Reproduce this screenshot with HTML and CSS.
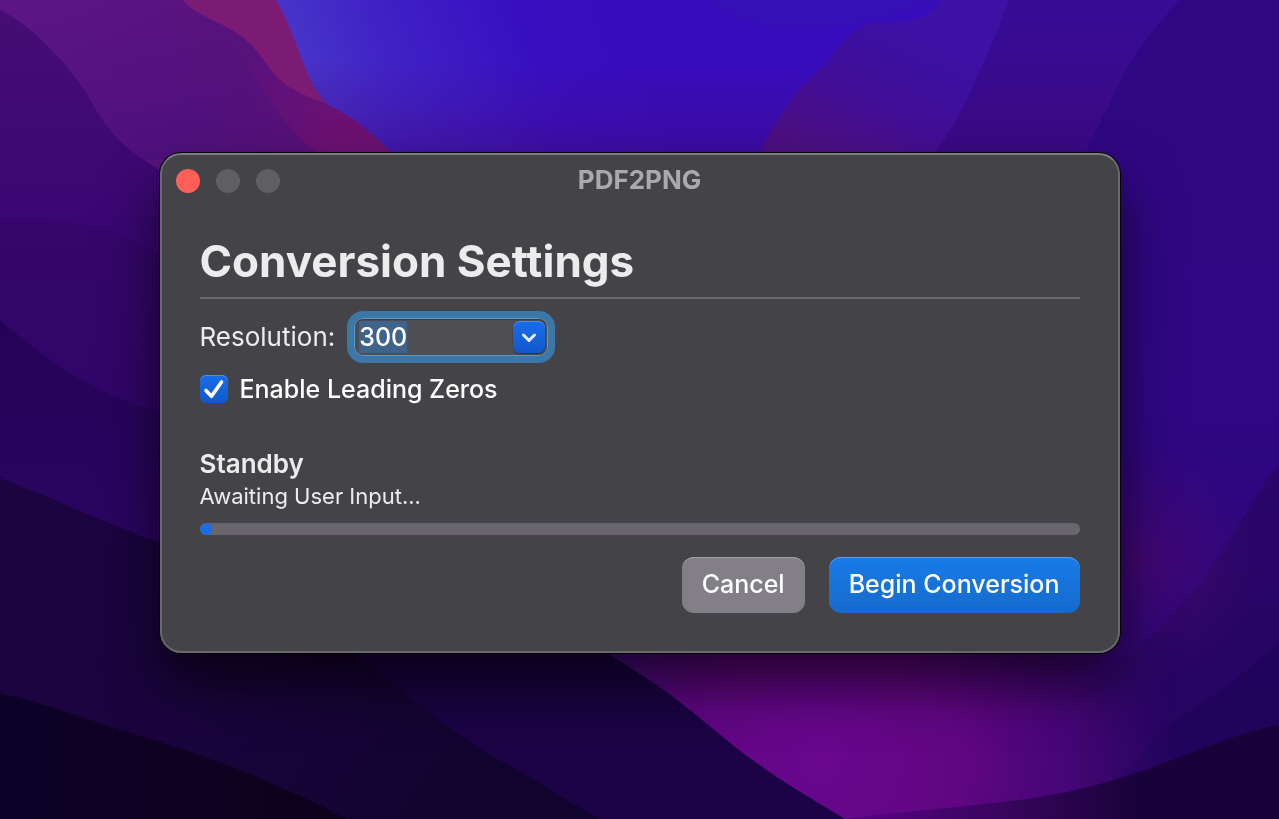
FILE: index.html
```
<!DOCTYPE html>
<html lang="en">
<head>
<meta charset="utf-8">
<title>PDF2PNG</title>
<link rel="stylesheet" href="styles.css">
</head>
<body>
<svg class="wallpaper" viewBox="0 0 1279 819" preserveAspectRatio="none" aria-hidden="true">
  <defs>
    <linearGradient id="sky" x1="300" y1="120" x2="620" y2="0" gradientUnits="userSpaceOnUse">
      <stop offset="0" stop-color="#4a38c8"/><stop offset=".3" stop-color="#4023c6"/><stop offset=".7" stop-color="#380fc0"/><stop offset="1" stop-color="#370cbc"/>
    </linearGradient>
    <linearGradient id="skyFade" x1="0" y1="60" x2="0" y2="170" gradientUnits="userSpaceOnUse">
      <stop offset="0" stop-color="#400c90" stop-opacity="0"/><stop offset="1" stop-color="#400c90" stop-opacity=".7"/>
    </linearGradient>
    <linearGradient id="plum" x1="60" y1="0" x2="330" y2="150" gradientUnits="userSpaceOnUse">
      <stop offset="0" stop-color="#5c1585"/><stop offset=".6" stop-color="#58127c"/><stop offset="1" stop-color="#6c1172"/>
    </linearGradient>
    <linearGradient id="plumFade" x1="0" y1="0" x2="0" y2="180" gradientUnits="userSpaceOnUse">
      <stop offset="0" stop-color="#48107c" stop-opacity="0"/><stop offset="1" stop-color="#48107c" stop-opacity=".7"/>
    </linearGradient>
    <linearGradient id="left1" x1="0" y1="10" x2="0" y2="260" gradientUnits="userSpaceOnUse">
      <stop offset="0" stop-color="#460d74"/><stop offset="1" stop-color="#380672"/>
    </linearGradient>
    <linearGradient id="left2" x1="0" y1="218" x2="0" y2="410" gradientUnits="userSpaceOnUse">
      <stop offset="0" stop-color="#35066b"/><stop offset="1" stop-color="#300568"/>
    </linearGradient>
    <linearGradient id="left3" x1="0" y1="330" x2="0" y2="520" gradientUnits="userSpaceOnUse">
      <stop offset="0" stop-color="#250458"/><stop offset="1" stop-color="#29055f"/>
    </linearGradient>
    <linearGradient id="left4" x1="0" y1="500" x2="480" y2="819" gradientUnits="userSpaceOnUse">
      <stop offset="0" stop-color="#1b0440"/><stop offset=".45" stop-color="#1b043e"/><stop offset="1" stop-color="#10042e"/>
    </linearGradient>
    <linearGradient id="left5" x1="0" y1="0" x2="340" y2="0" gradientUnits="userSpaceOnUse">
      <stop offset="0" stop-color="#0c0228"/><stop offset=".6" stop-color="#0f0222"/><stop offset="1" stop-color="#0b011a"/>
    </linearGradient>
    <linearGradient id="right1" x1="900" y1="20" x2="840" y2="160" gradientUnits="userSpaceOnUse">
      <stop offset="0" stop-color="#3c11a4"/><stop offset=".5" stop-color="#400e99"/><stop offset="1" stop-color="#4c0f82"/>
    </linearGradient>
    <linearGradient id="right2" x1="0" y1="0" x2="0" y2="170" gradientUnits="userSpaceOnUse">
      <stop offset="0" stop-color="#370c96"/><stop offset="1" stop-color="#3b0880"/>
    </linearGradient>
    <linearGradient id="right3" x1="0" y1="0" x2="0" y2="819" gradientUnits="userSpaceOnUse">
      <stop offset="0" stop-color="#300782"/><stop offset=".5" stop-color="#2f0784"/><stop offset="1" stop-color="#280470"/>
    </linearGradient>
    <linearGradient id="right4" x1="0" y1="463" x2="0" y2="800" gradientUnits="userSpaceOnUse">
      <stop offset="0" stop-color="#2a066a"/><stop offset="1" stop-color="#240460"/>
    </linearGradient>
    <radialGradient id="magenta" cx="820" cy="760" r="360" gradientUnits="userSpaceOnUse">
      <stop offset="0" stop-color="#68078e"/><stop offset=".4" stop-color="#600682"/><stop offset=".75" stop-color="#4b0675" stop-opacity=".7"/><stop offset="1" stop-color="#390670" stop-opacity="0"/>
    </radialGradient>
    <radialGradient id="violet" cx="1140" cy="560" r="120" gradientUnits="userSpaceOnUse">
      <stop offset="0" stop-color="#4a0870" stop-opacity=".7"/><stop offset="1" stop-color="#4a0870" stop-opacity="0"/>
    </radialGradient>
    <linearGradient id="corner" x1="860" y1="0" x2="1140" y2="0" gradientUnits="userSpaceOnUse">
      <stop offset="0" stop-color="#560281"/><stop offset=".5" stop-color="#39055e"/><stop offset="1" stop-color="#180239"/>
    </linearGradient>
  </defs>
  <path fill="url(#sky)" d="M0 0H1279V819H0z"/>
  <path fill="#3512b4" opacity=".6" d="M706 0C718 14 740 18 770 28C800 34 860 28 940 0z"/>
  <path fill="url(#skyFade)" d="M300 0H900V200H300z"/>
  <path fill="url(#right1)" d="M760 153C776 118 800 85 825 65C845 35 862 22 878 22C910 22 926 22 942 0H1279V819H700z"/>
  <path fill="url(#right2)" d="M1008 0C1002 24 990 46 978 75C962 112 950 132 935 153V819H1279V0z"/>
  <path fill="url(#right3)" d="M1181 0C1150 30 1128 62 1114 94C1100 124 1092 138 1085 153L640 819H1279V0z"/>
  <path fill="url(#right4)" d="M1279 463C1250 500 1218 568 1178 608C1150 640 1120 665 1080 690V819H1279z"/>
  <path fill="#1e0358" opacity=".7" d="M1279 640C1240 682 1200 704 1160 730L1090 819H1279z"/>
  <path fill="url(#violet)" d="M1000 400H1279V700H1000z"/>
  <path fill="url(#magenta)" d="M400 400H1279V819H400z"/>
  <path fill="url(#corner)" d="M1279 724C1210 740 1160 770 1084 788C1020 804 950 806 845 819H1279z"/>
  <path fill="#7c1b74" d="M0 0H276C293 30 297 50 308 75C316 92 322 100 330 106L250 153H0z"/>
  <path fill="url(#plum)" d="M0 0H183C200 20 225 20 248 42C266 58 270 76 293 89C306 97 318 99 330 106C360 120 378 140 392 153L500 400H0z"/>
  <path fill="url(#plumFade)" d="M0 0H183C230 30 240 60 270 100C290 130 305 146 330 160H0z"/>
  <path fill="url(#left1)" d="M0 10C30 24 62 58 86 92C108 136 130 152 160 170L400 400H0z"/>
  <path fill="url(#left2)" d="M0 218C50 216 112 222 160 256L400 500H0z"/>
  <path fill="url(#left3)" d="M0 320C40 354 90 394 160 412L400 600H0z"/>
  <path fill="url(#left4)" d="M0 478C50 496 110 526 160 543L500 600L620 819H0z"/>
  <path fill="#1b0345" d="M300 610L355 655C400 688 448 730 490 755C530 776 570 804 600 819H845C800 792 770 774 735 747C700 718 672 694 640 674L610 655L500 590z"/>
  <path fill="url(#left5)" d="M0 693C50 705 90 720 130 733C220 760 266 778 347 819H0z"/>
</svg>

<main class="desktop">
  <section class="window" aria-labelledby="window-title">
    <header class="titlebar">
      <div class="lights">
        <button class="light light-close" type="button" aria-label="Close"></button>
        <button class="light" type="button" aria-label="Minimize" disabled></button>
        <button class="light" type="button" aria-label="Zoom" disabled></button>
      </div>
      <div class="window-title" id="window-title">PDF2PNG</div>
    </header>
    <form class="content">
      <h1 class="heading">Conversion Settings</h1>
      <hr class="rule">
      <div class="field-row">
        <label for="resolution">Resolution:</label>
        <div class="combo">
          <input class="combo-input" id="resolution" type="text" value="300" autocomplete="off">
          <button class="combo-button" type="button" aria-label="Show resolutions">
            <svg viewBox="0 0 32 32" width="32" height="32" aria-hidden="true"><path d="M10.500 14L16 19.500L21.500 14" fill="none" stroke="#e4edfc" stroke-width="3" stroke-linecap="round" stroke-linejoin="round"/></svg>
          </button>
        </div>
      </div>
      <label class="check">
        <span class="check-box">
          <input class="check-input" type="checkbox" checked>
          <svg class="check-mark" viewBox="0 0 28 28" width="28" height="28" aria-hidden="true"><path d="M6 15.500L11.500 21.300L21.500 7" fill="none" stroke="#fff" stroke-width="3.600" stroke-linecap="round" stroke-linejoin="round"/></svg>
        </span>
        <span>Enable Leading Zeros</span>
      </label>
      <div class="status">
        <div class="status-title" id="status-title">Standby</div>
        <div class="status-text">Awaiting User Input...</div>
      </div>
      <progress class="progress" value="1" max="100" aria-labelledby="status-title"></progress>
      <div class="actions">
        <button class="button" type="button">Cancel</button>
        <button class="button button-primary" type="submit">Begin Conversion</button>
      </div>
    </form>
  </section>
</main>
<script src="main.js"></script>
</body>
</html>
```

FILE: styles.css
```
*, *::before, *::after {
  box-sizing: border-box;
}

body {
  margin: 0;
  background: #1b0345;
  color: #ececec;
  font-family: Inter, "Liberation Sans", sans-serif;
  font-size: 26px;
  line-height: 32px;
}

button, input {
  margin: 0;
  border: 0;
  padding: 0;
  font: inherit;
  color: inherit;
}

.wallpaper {
  position: fixed;
  inset: 0;
  width: 100%;
  height: 100%;
  z-index: -1;
}

.desktop {
  display: flex;
  align-items: center;
  justify-content: center;
  min-height: 100vh;
  padding: 24px 24px 37px;
}

.window {
  width: 100%;
  max-width: 960px;
  border: 2px solid #69686c;
  border-top-color: #7d7c80;
  border-radius: 21px;
  background: #444348;
  box-shadow: 0 0 0 1px #08040c, 0 32px 56px rgba(0, 0, 0, .65);
}

.titlebar {
  display: grid;
  grid-template-columns: 1fr auto 1fr;
  align-items: center;
  padding: 9px 14px 11px;
}

.lights {
  display: flex;
  gap: 16px;
  padding-top: 2px;
}

.light {
  width: 24px;
  height: 24px;
  border-radius: 50%;
  background: #5f5e62;
}

.light-close {
  background: #ff5f57;
}

.window-title {
  color: #aaa9ac;
  font-weight: 700;
}

.content {
  padding: 26px 38px 38px;
}

.heading {
  margin: 0 0 8px;
  font-size: 44px;
  font-weight: 700;
  line-height: 56px;
}

.rule {
  height: 2px;
  margin: 0 0 19px;
  border: 0;
  background: #69686c;
}

.field-row {
  display: flex;
  align-items: center;
  gap: 19px;
  margin-bottom: 19px;
}

.combo {
  display: flex;
  align-items: center;
  width: 194px;
  height: 38px;
  padding: 0 3px 0 5px;
  border-radius: 9px;
  background: #4f4e52;
  box-shadow: inset 0 0 0 1px #5b9bc9, inset 0 2px 1px #3c3b40, 0 0 0 7px #3c77a8;
}

.combo-input {
  flex: 1;
  min-width: 0;
  height: 32px;
  background: transparent;
  color: #fff;
  font-size: 25px;
  font-weight: 500;
  outline: none;
}

.combo-input::selection {
  background: #3f638b;
  color: #fff;
}

.combo-button {
  width: 32px;
  height: 32px;
  border-radius: 7px;
  background: linear-gradient(#196de8, #1059cb);
  box-shadow: inset 0 1px 0 #4a8cef, 0 1px 2px rgba(0, 0, 0, .4);
}

.combo-button svg {
  display: block;
}

.check {
  display: flex;
  align-items: center;
  gap: 12px;
  height: 28px;
  color: #fff;
  font-size: 25px;
  font-weight: 500;
}

.check-box {
  display: grid;
}

.check-input, .check-mark {
  grid-area: 1 / 1;
}

.check-input {
  appearance: none;
  width: 28px;
  height: 28px;
  border-radius: 6px;
  background: linear-gradient(#196de8, #1059cb);
  box-shadow: inset 0 1px 0 #4a8cef;
}

.check-mark {
  pointer-events: none;
}

.status {
  display: grid;
  margin: 45px 0 11px;
}

.status-title {
  font-weight: 600;
}

.status-text {
  font-size: 22px;
}

.progress {
  appearance: none;
  display: block;
  width: 100%;
  height: 12px;
  border: 0;
  border-radius: 6px;
  background: #69666d;
  overflow: hidden;
}

.progress::-webkit-progress-bar {
  background: #69666d;
  border-radius: 6px;
}

.progress::-webkit-progress-value {
  min-width: 12px;
  border-radius: 6px;
  background: #196de8;
}

.actions {
  display: flex;
  justify-content: flex-end;
  gap: 24px;
  margin-top: 22px;
}

.button {
  height: 56px;
  padding: 0 20px 2px;
  border-radius: 12px;
  background: #828086;
  box-shadow: inset 0 1px 0 #a09fa4;
  color: #fff;
  font-size: 25px;
  font-weight: 500;
}

.button-primary {
  background: linear-gradient(#197be8, #156bcb);
  box-shadow: inset 0 1px 0 #58a0f0;
}
```

FILE: main.js
```
const resolution = document.getElementById("resolution");
resolution.focus();
resolution.select();
```
